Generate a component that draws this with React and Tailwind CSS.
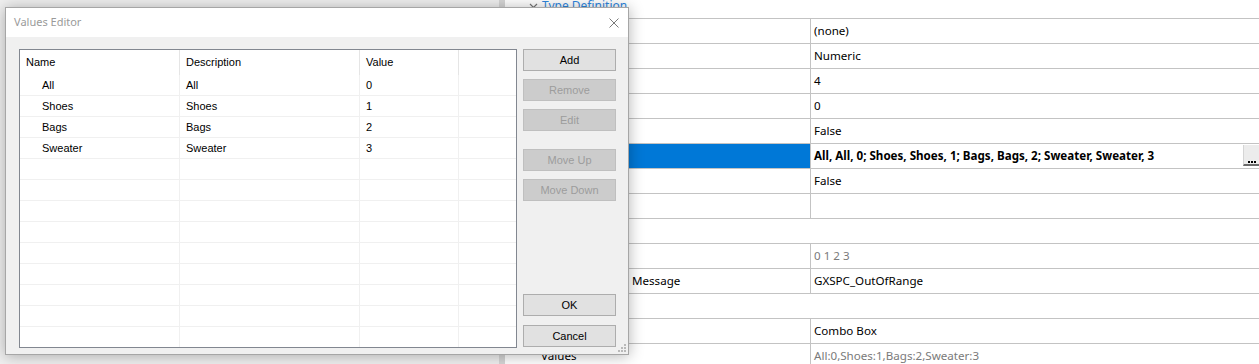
import clsx from "clsx";

// labels left empty where the dialog hides them completely
const gridRows = [
  { cat: true, label: "Type Definition" },
  { label: "", value: "(none)" },
  { label: "", value: "Numeric" },
  { label: "", value: "4" },
  { label: "", value: "0" },
  { label: "", value: "False" },
  {
    label: "",
    value: "All, All, 0; Shoes, Shoes, 1; Bags, Bags, 2; Sweater, Sweater, 3",
    selected: true,
  },
  { label: "", value: "False" },
  { label: "", value: "" },
  { cat: true, label: "" },
  { label: "", value: "0 1 2 3", dim: true },
  { label: "Message", value: "GXSPC_OutOfRange", indent: "pl-[127px]" },
  { cat: true, label: "" },
  { label: "", value: "Combo Box" },
  { label: "Values", value: "All:0,Shoes:1,Bags:2,Sweater:3", dim: true },
];

const items = [
  { name: "All", desc: "All", value: "0" },
  { name: "Shoes", desc: "Shoes", value: "1" },
  { name: "Bags", desc: "Bags", value: "2" },
  { name: "Sweater", desc: "Sweater", value: "3" },
];

function PropertyGrid() {
  return (
    <div className="flex-1 flex flex-col bg-white text-[11.6px]">
      {gridRows.map((r, i) =>
        r.cat ? (
          <div
            key={i}
            className={clsx(
              "shrink-0 flex items-center h-[25px] border-b border-[#c3c3c3] pl-[24px] text-[12px] text-[#2e86de]",
              i === 0 && "-mt-[6px]"
            )}
          >
            <svg width="9" height="6" viewBox="0 0 9 6" className="mr-[4px]">
              <path d="M1 1l3.5 3.5L8 1" fill="none" stroke="#777" strokeWidth="1.2" />
            </svg>
            <span>{r.label}</span>
          </div>
        ) : (
          <div key={i} className="shrink-0 flex h-[25px] border-b border-[#c3c3c3]">
            <div
              className={clsx(
                "w-[305px] flex items-center",
                r.indent || "pl-[36px]",
                r.selected ? "bg-[#0078d7] text-white" : "text-black"
              )}
            >
              {r.label}
            </div>
            <div className="flex-1 flex items-center border-l border-[#c3c3c3] pl-[3px]">
              <span
                className={clsx(
                  r.selected && "font-bold",
                  r.dim ? "text-[#7a7a7a]" : "text-black"
                )}
              >
                {r.value}
              </span>
              {r.selected && (
                <div className="ml-auto self-start mt-[1px] w-[16px] h-[21px] bg-[#ececec] border-l border-[#d5d5d5] border-b-2 border-b-[#6b6b6b] flex items-end justify-center gap-[1px] pb-[1px]">
                  <span className="w-[2px] h-[2px] bg-black" />
                  <span className="w-[2px] h-[2px] bg-black" />
                  <span className="w-[2px] h-[2px] bg-black" />
                </div>
              )}
            </div>
          </div>
        )
      )}
    </div>
  );
}

function Btn({ children, disabled, className }) {
  return (
    <div
      className={clsx(
        "shrink-0 h-[22px] w-[93px] flex items-center justify-center border",
        disabled
          ? "bg-[#cccccc] border-[#bfbfbf] text-[#9c9c9c]"
          : "bg-[#e1e1e1] border-[#adadad] text-black",
        className
      )}
    >
      {children}
    </div>
  );
}

function ValuesEditor() {
  const rows = [...items, ...Array(9).fill(null)];
  return (
    <div className="absolute left-[5px] top-[7px] w-[624px] h-[348px] border border-[#a6a6a6] bg-[#f0f0f0] shadow-[0_1px_14px_rgba(0,0,0,0.3)] flex flex-col">
      <div className="shrink-0 h-[29px] bg-white flex items-center justify-between pl-[8px] pr-[9px]">
        <span className="text-[11px] text-[#9a9a9a]">Values Editor</span>
        <svg width="10" height="10" viewBox="0 0 10 10">
          <path d="M0.5 0.5l9 9M9.5 0.5l-9 9" stroke="#7a7a7a" strokeWidth="1" />
        </svg>
      </div>
      <div className="flex gap-[6px] pt-[12px] pl-[13px] font-['Liberation_Sans',Arial,sans-serif] text-[11px]">
        <div className="w-[498px] h-[299px] border border-[#828790] bg-white overflow-hidden">
          <div className="flex h-[25px] items-center">
            <div className="w-[160px] h-full flex items-center pl-[6px] border-r border-[#e5e5e5]">Name</div>
            <div className="w-[180px] h-full flex items-center pl-[6px] border-r border-[#e5e5e5]">Description</div>
            <div className="w-[99px] h-full flex items-center pl-[6px] border-r border-[#e5e5e5]">Value</div>
            <div className="flex-1 h-full" />
          </div>
          {rows.map((it, i) => (
            <div key={i} className="flex h-[21px] border-b border-[#f0f0f0]">
              <div className="w-[160px] flex items-center pl-[22px] border-r border-[#f0f0f0]">{it?.name}</div>
              <div className="w-[180px] flex items-center pl-[6px] border-r border-[#f0f0f0]">{it?.desc}</div>
              <div className="w-[99px] flex items-center pl-[6px] border-r border-[#f0f0f0]">{it?.value}</div>
              <div className="flex-1" />
            </div>
          ))}
        </div>
        <div className="w-[93px] h-[299px] flex flex-col">
          <Btn>Add</Btn>
          <Btn disabled className="mt-[8px]">Remove</Btn>
          <Btn disabled className="mt-[8px]">Edit</Btn>
          <Btn disabled className="mt-[18px]">Move Up</Btn>
          <Btn disabled className="mt-[8px]">Move Down</Btn>
          <Btn className="mt-auto">OK</Btn>
          <Btn className="mt-[9px] mb-[1px]">Cancel</Btn>
        </div>
      </div>
      <svg width="8" height="8" viewBox="0 0 8 8" className="absolute right-[2px] bottom-[2px]">
        <g fill="#b9b9b9">
          <rect x="6" y="0" width="2" height="2" />
          <rect x="3" y="3" width="2" height="2" />
          <rect x="6" y="3" width="2" height="2" />
          <rect x="0" y="6" width="2" height="2" />
          <rect x="3" y="6" width="2" height="2" />
          <rect x="6" y="6" width="2" height="2" />
        </g>
      </svg>
    </div>
  );
}

export default function App() {
  return (
    <div className="relative w-[1259px] h-[364px] overflow-hidden bg-white flex font-['Noto_Sans',sans-serif] text-[11px] text-black">
      <div className="w-[499px] bg-[#f0f0f0]" />
      <div className="w-[6px] bg-[#d6d6d6]" />
      <PropertyGrid />
      <ValuesEditor />
    </div>
  );
}
